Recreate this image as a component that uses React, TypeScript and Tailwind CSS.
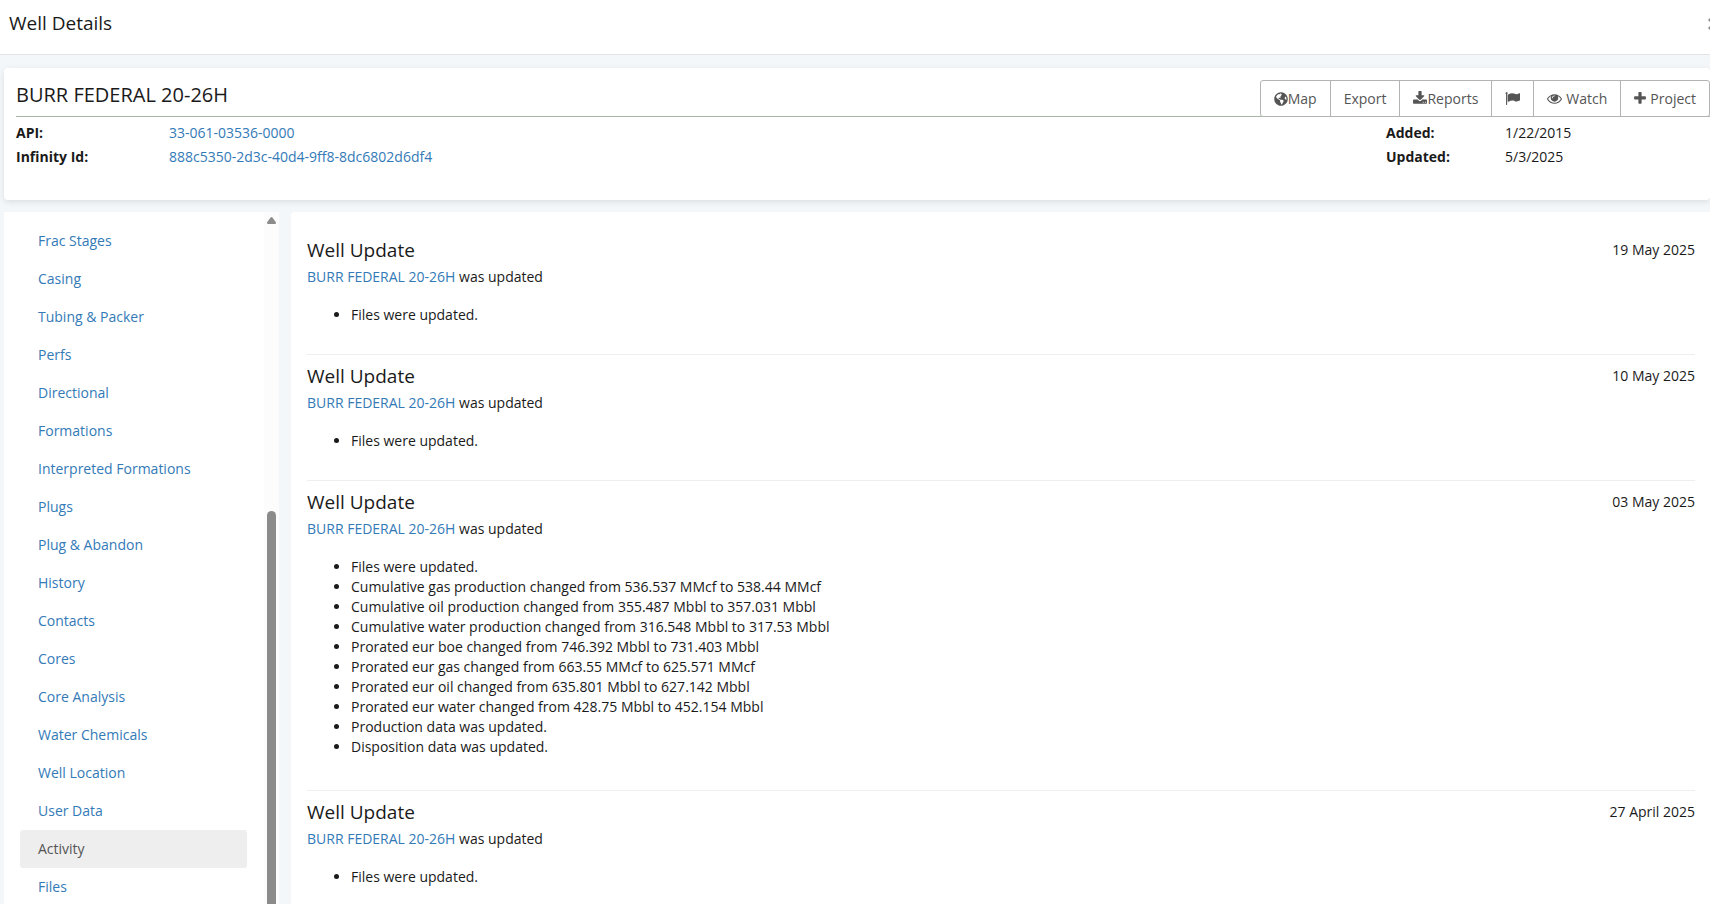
import { FaGlobeAmericas } from "react-icons/fa";

interface WellUpdate {
    date: string;
    changes: string[];
}

const wellName = "BURR FEDERAL 20-26H";

const menuItems = [
    "Frac Stages",
    "Casing",
    "Tubing & Packer",
    "Perfs",
    "Directional",
    "Formations",
    "Interpreted Formations",
    "Plugs",
    "Plug & Abandon",
    "History",
    "Contacts",
    "Cores",
    "Core Analysis",
    "Water Chemicals",
    "Well Location",
    "User Data",
    "Activity",
    "Files",
];

const updates: WellUpdate[] = [
    { date: "19 May 2025", changes: ["Files were updated."] },
    { date: "10 May 2025", changes: ["Files were updated."] },
    {
        date: "03 May 2025",
        changes: [
            "Files were updated.",
            "Cumulative gas production changed from 536.537 MMcf to 538.44 MMcf",
            "Cumulative oil production changed from 355.487 Mbbl to 357.031 Mbbl",
            "Cumulative water production changed from 316.548 Mbbl to 317.53 Mbbl",
            "Prorated eur boe changed from 746.392 Mbbl to 731.403 Mbbl",
            "Prorated eur gas changed from 663.55 MMcf to 625.571 MMcf",
            "Prorated eur oil changed from 635.801 Mbbl to 627.142 Mbbl",
            "Prorated eur water changed from 428.75 Mbbl to 452.154 Mbbl",
            "Production data was updated.",
            "Disposition data was updated.",
        ],
    },
    { date: "27 April 2025", changes: ["Files were updated."] },
];

const DownloadIcon = () => (
    <svg width="14" height="15" viewBox="64 0 1664 1792" fill="currentColor">
        <path d="M1344 1344q0-26-19-45t-45-19-45 19-19 45 19 45 45 19 45-19 19-45zm256 0q0-26-19-45t-45-19-45 19-19 45 19 45 45 19 45-19 19-45zm128-224v320q0 40-28 68t-68 28h-1472q-40 0-68-28t-28-68v-320q0-40 28-68t68-28h465l135 136q58 56 136 56t136-56l136-136h464q40 0 68 28t28 68zm-325-569q17 41-14 70l-448 448q-18 19-45 19t-45-19l-448-448q-31-29-14-70 17-39 59-39h256v-448q0-26 19-45t45-19h256q26 0 45 19t19 45v448h256q42 0 59 39z" />
    </svg>
);

const FlagIcon = () => (
    <svg width="15" height="15" viewBox="0 0 1792 1792" fill="currentColor">
        <path d="M320 256q0 72-64 110v1266q0 13-9.5 22.5t-22.5 9.5h-64q-13 0-22.5-9.5t-9.5-22.5v-1266q-64-38-64-110 0-53 37.5-90.5t90.5-37.5 90.5 37.5 37.5 90.5zm1472 64v763q0 25-12.5 38.5t-39.5 27.5q-215 116-369 116-61 0-123.5-22t-108.5-48-115.5-48-142.5-22q-192 0-464 146-17 9-33 9-26 0-45-19t-19-45v-742q0-32 31-55 21-14 79-43 236-120 421-120 107 0 200 29t219 88q38 19 88 19 54 0 117.5-21t110-47 88-47 54.5-21q26 0 45 19t19 45z" />
    </svg>
);

const EyeIcon = () => (
    <svg width="15" height="15" viewBox="0 0 1792 1792" fill="currentColor">
        <path d="M1664 960q-152-236-381-353 61 104 61 225 0 185-131.5 316.5t-316.5 131.5-316.5-131.5-131.5-316.5q0-121 61-225-229 117-381 353 133 205 333.5 326.5t434.5 121.5 434.5-121.5 333.5-326.5zm-720-384q0-20-14-34t-34-14q-125 0-214.5 89.5t-89.5 214.5q0 20 14 34t34 14 34-14 14-34q0-86 61-147t147-61q20 0 34-14t14-34zm848 384q0 34-20 69-140 230-376.5 368.5t-499.5 138.5-499.5-139-376.5-368q-20-35-20-69t20-69q140-229 376.5-368t499.5-139 499.5 139 376.5 368q20 35 20 69z" />
    </svg>
);

const PlusIcon = () => (
    <svg width="12" height="15" viewBox="192 0 1408 1792" fill="currentColor">
        <path d="M1600 736v192q0 40-28 68t-68 28h-416v416q0 40-28 68t-68 28h-192q-40 0-68-28t-28-68v-416h-416q-40 0-68-28t-28-68v-192q0-40 28-68t68-28h416v-416q0-40 28-68t68-28h192q40 0 68 28t28 68v416h416q40 0 68 28t28 68z" />
    </svg>
);

const toolButton = "flex items-center border-r border-[#b3b3b3] px-[13px] text-[#555] last:border-r-0 hover:bg-gray-100";

const Toolbar = () => (
    <div className="flex h-[37px] shrink-0 rounded-[3px] border border-[#b3b3b3] bg-white">
        <button type="button" className={toolButton}>
            <FaGlobeAmericas size={14} />
            Map
        </button>
        <button type="button" className={toolButton}>Export</button>
        <button type="button" className={toolButton}>
            <DownloadIcon />
            Reports
        </button>
        <button type="button" aria-label="Flag" className={toolButton}>
            <FlagIcon />
        </button>
        <button type="button" className={`${toolButton} gap-1`}>
            <EyeIcon />
            Watch
        </button>
        <button type="button" className={`${toolButton} gap-1`}>
            <PlusIcon />
            Project
        </button>
    </div>
);

const WellHeader = () => (
    <section className="ml-1 rounded-[4px] bg-white pb-[31px] pl-3 pt-3 shadow-[0_2px_6px_rgba(0,0,0,0.1)]">
        <div className="flex h-[37px] items-start justify-between border-b border-[#a9b3a6]">
            <h2 className="text-[20px] leading-[30px]">{wellName}</h2>
            <Toolbar />
        </div>

        <div className="flex justify-between pt-1 leading-6">
            <dl className="grid grid-cols-[153px_auto]">
                <dt className="font-bold">API:</dt>
                <dd><a href="#api" className="text-[#337ab7]">33-061-03536-0000</a></dd>
                <dt className="font-bold">Infinity Id:</dt>
                <dd><a href="#infinity" className="text-[#337ab7]">888c5350-2d3c-40d4-9ff8-8dc6802d6df4</a></dd>
            </dl>
            <dl className="grid grid-cols-[119px_205px]">
                <dt className="font-bold">Added:</dt>
                <dd>1/22/2015</dd>
                <dt className="font-bold">Updated:</dt>
                <dd>5/3/2025</dd>
            </dl>
        </div>
    </section>
);

const SideMenu = () => (
    <aside className="ml-1 flex w-[275px] shrink-0 overflow-hidden bg-white">
        <nav className="flex-1 pl-4 pr-[17px] pt-[10px]">
            {menuItems.map((item) => (
                <a
                    key={item}
                    href={`#${item}`}
                    className={`flex h-[38px] items-center rounded-[3px] pl-[18px] ${
                        item === "Activity" ? "bg-[#eee] text-[#555]" : "text-[#337ab7]"
                    }`}
                >
                    {item}
                </a>
            ))}
        </nav>

        {/* scrollbar */}
        <div className="flex w-[15px] flex-col items-center bg-[#fcfcfc] pt-[5px]">
            <svg width="9" height="7" viewBox="0 0 9 7" fill="#8b8b8b">
                <path d="M3.6.6Q4.5-.5 5.4.6L8.7 5Q9.4 7 8 7H1Q-.4 7 .3 5Z" />
            </svg>
            <div className="mt-[287px] w-[9px] flex-1 rounded-t-full bg-[#8b8b8b]" />
        </div>
    </aside>
);

const ActivityItem = ({ update }: { update: WellUpdate }) => (
    <article className="border-b border-[#eee] pb-[29px] pt-[9px]">
        <div className="flex items-center justify-between">
            <h3 className="text-[19px] leading-6">Well Update</h3>
            <time>{update.date}</time>
        </div>
        <p className="mt-[5px]">
            <a href="#well" className="text-[#337ab7]">{wellName}</a> was updated
        </p>
        <ul className={`mt-[18px] list-disc pl-11 ${update.changes.length > 1 ? "mb-1" : ""}`}>
            {update.changes.map((change) => (
                <li key={change}>{change}</li>
            ))}
        </ul>
    </article>
);

export default function App() {
    return (
        <div className="flex h-screen flex-col overflow-hidden bg-[#f3f7fa] font-['Open_Sans',sans-serif] text-[14px] leading-5 text-[#1a1a1a]">
            <header className="flex h-[55px] shrink-0 justify-between overflow-hidden border-b border-[#e2e4e6] bg-white pl-[9px] pt-[9px]">
                <h1 className="text-[19px] leading-7">Well Details</h1>
                <button type="button" aria-label="Close" className="-mr-[10px] flex h-[30px] items-center text-[#888]">
                    <svg width="12" height="12" viewBox="0 0 12 12" stroke="currentColor" strokeWidth="3">
                        <path d="M1 1L11 11M11 1L1 11" />
                    </svg>
                </button>
            </header>

            <div className="flex min-h-0 flex-1 flex-col gap-3 pt-[13px]">
                <WellHeader />
                <div className="flex min-h-0 flex-1 gap-3">
                    <SideMenu />
                    <main className="flex-1 overflow-hidden rounded-tl-[4px] bg-white pl-4 pr-[15px] pt-[17px]">
                        {updates.map((update) => (
                            <ActivityItem key={update.date} update={update} />
                        ))}
                    </main>
                </div>
            </div>
        </div>
    );
}
